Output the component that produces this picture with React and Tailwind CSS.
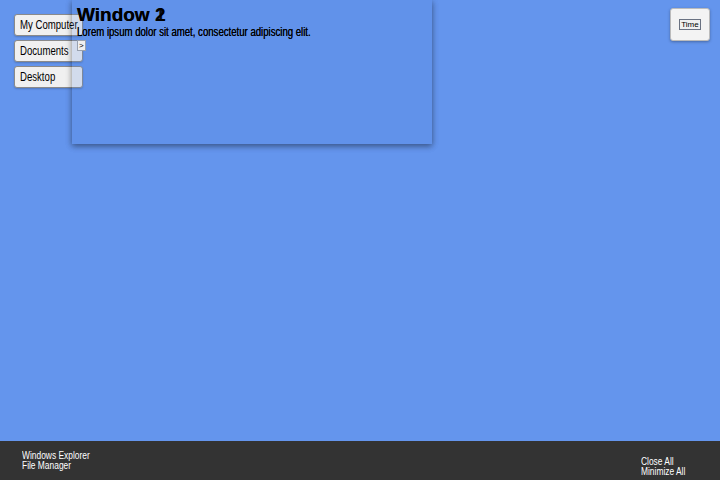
import React from "react";

const icons = ["My Computer", "Documents", "Desktop"];

// the reference text is set in a condensed face; squeeze Liberation Sans to match
const Narrow = ({ children, className = "" }) => (
  <span className={`inline-block origin-left whitespace-nowrap ${className}`}>{children}</span>
);

const Window = ({ title }) => {
  return (
    <div className="absolute left-[72px] top-0 w-[360px] h-[144px] bg-[#5a8ae0]/10 shadow-[0_2px_6px_rgba(0,0,0,0.25)] px-[5px] pt-[3px]">
      <h2 className="text-[19px] leading-[23px] font-bold text-black">{title}</h2>
      <p className="text-[12px] leading-[13px] text-black">
        <Narrow className="scale-x-[0.8]">Lorem ipsum dolor sit amet, consectetur adipiscing elit.</Narrow>
      </p>
      <button className="block text-[8px] leading-[9px] px-[1px] mt-[1px] bg-[#f0f0f0] border border-gray-400">
        &gt;
      </button>
    </div>
  );
};

export default function App() {
  return (
    <div
      className="relative w-[720px] h-[480px] overflow-hidden bg-[#6495ed] flex flex-col"
      style={{ fontFamily: '"Liberation Sans", Arial, sans-serif' }}
    >
      <div className="relative flex-1">
        {/* Desktop icons */}
        <div className="flex flex-col items-start gap-[4px] pl-[14px] pt-[14px]">
          {icons.map((name, i) => (
            <button
              key={i}
              className="w-[69px] h-[22px] text-left pl-[5px] text-[12px] text-black bg-[#f0f0f0] border border-[#8a8a8a] rounded-[3px] shadow-[0_1px_2px_rgba(0,0,0,0.2)]"
            >
              <Narrow className="scale-x-[0.8]">{name}</Narrow>
            </button>
          ))}
        </div>

        {/* Windows */}
        <Window title="Window 1" />
        <Window title="Window 2" />

        {/* Clock */}
        <div className="absolute right-[10px] top-[8px] w-[40px] h-[33px] bg-[#f3f3f3] rounded-[3px] border border-[#bbb] shadow-[0_1px_3px_rgba(0,0,0,0.3)] flex items-center justify-center">
          <button className="text-[8px] leading-[9px] px-[1px] bg-[#f0f0f0] border border-gray-500">
            Time
          </button>
        </div>
      </div>

      {/* Taskbar */}
      <div className="h-[39px] bg-[#333333] flex justify-between items-start text-[10px] leading-[10px] text-white">
        <div className="pl-[22px] pt-[10px]">
          <div><Narrow className="scale-x-[0.84]">Windows Explorer</Narrow></div>
          <div><Narrow className="scale-x-[0.84]">File Manager</Narrow></div>
        </div>
        <div className="pr-[34px] pt-[16px] w-[45px] box-content">
          <div><Narrow className="scale-x-[0.84]">Close All</Narrow></div>
          <div><Narrow className="scale-x-[0.84]">Minimize All</Narrow></div>
        </div>
      </div>
    </div>
  );
}
